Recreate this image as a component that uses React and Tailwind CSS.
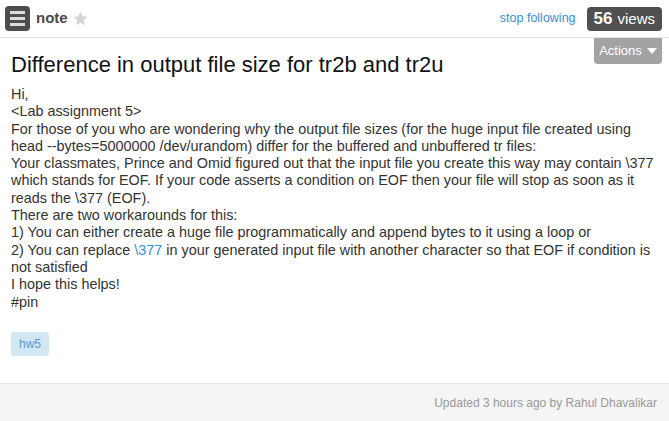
export default function App() {
  return (
    <div className="w-[669px] h-[421px] bg-white flex flex-col text-[#333] font-['Liberation_Sans',Arial,sans-serif]">
      <div className="h-[38px] shrink-0 border-b border-[#e3e3e3] flex items-center pl-[5px] pr-[7px]">
        <div className="w-[25px] h-[25px] rounded-[4px] bg-[#4d4d4d] flex flex-col items-center justify-center gap-[3px]">
          <div className="w-[15px] h-[3px] bg-[#dcdcdc]" />
          <div className="w-[15px] h-[3px] bg-[#dcdcdc]" />
          <div className="w-[15px] h-[3px] bg-[#dcdcdc]" />
        </div>
        <span className="ml-[6px] text-[15px] font-bold text-[#4a4a4a]">note</span>
        <svg className="ml-[4px]" width="17" height="17" viewBox="0 0 24 24">
          <path d="M12 2l2.9 6.9 7.1.6-5.4 4.7 1.6 7.3L12 17.8l-6.2 3.7 1.6-7.3L2 9.5l7.1-.6z" fill="#d4d4d4" />
        </svg>
        <div className="flex-1" />
        <span className="text-[12.5px] text-[#3b8ed4] mr-[11px]">stop following</span>
        <div className="h-[24px] px-[7px] rounded-[4px] bg-[#505050] text-white flex items-baseline gap-[5px] pt-[1px] leading-[22px]">
          <span className="text-[17px] font-bold">56</span>
          <span className="text-[15px]">views</span>
        </div>
      </div>
      <div className="flex-1 relative px-[11px]">
        <div className="absolute right-[7px] top-0 h-[26px] w-[68px] rounded-b-[4px] bg-[#a3a3a3] text-white text-[13px] flex items-center justify-center gap-[5px]">
          Actions
          <svg width="10" height="6" viewBox="0 0 10 6"><path d="M0 0h10L5 6z" fill="#fff" /></svg>
        </div>
        <h1 className="mt-[14px] text-[22px] leading-[26px] text-[#111]">Difference in output file size for tr2b and tr2u</h1>
        <div className="mt-[8px] text-[14.4px] leading-[17.3px] text-[#333]">
          <div>Hi,</div>
          <div>&lt;Lab assignment 5&gt;</div>
          <div>For those of you who are wondering why the output file sizes (for the huge input file created using head --bytes=5000000 /dev/urandom) differ for the buffered and unbuffered tr files:</div>
          <div>Your classmates, Prince and Omid figured out that the input file you create this way may contain \377 which stands for EOF. If your code asserts a condition on EOF then your file will stop as soon as it reads the \377 (EOF).</div>
          <div>There are two workarounds for this:</div>
          <div>1) You can either create a huge file programmatically and append bytes to it using a loop or</div>
          <div>2) You can replace <span className="text-[#3b8ed4]">\377</span> in your generated input file with another character so that EOF if condition is not satisfied</div>
          <div>I hope this helps!</div>
          <div>#pin</div>
        </div>
        <div className="mt-[21px] inline-flex h-[24px] px-[8px] items-center rounded-[3px] bg-[#d2e7f3] text-[#5b9bcc] text-[12px]">hw5</div>
      </div>
      <div className="h-[38px] shrink-0 border-t border-[#e5e5e5] bg-[#f5f5f5] flex items-center justify-end pr-[12px] text-[12px] text-[#999]">
        Updated 3 hours ago by Rahul Dhavalikar
      </div>
    </div>
  );
}
